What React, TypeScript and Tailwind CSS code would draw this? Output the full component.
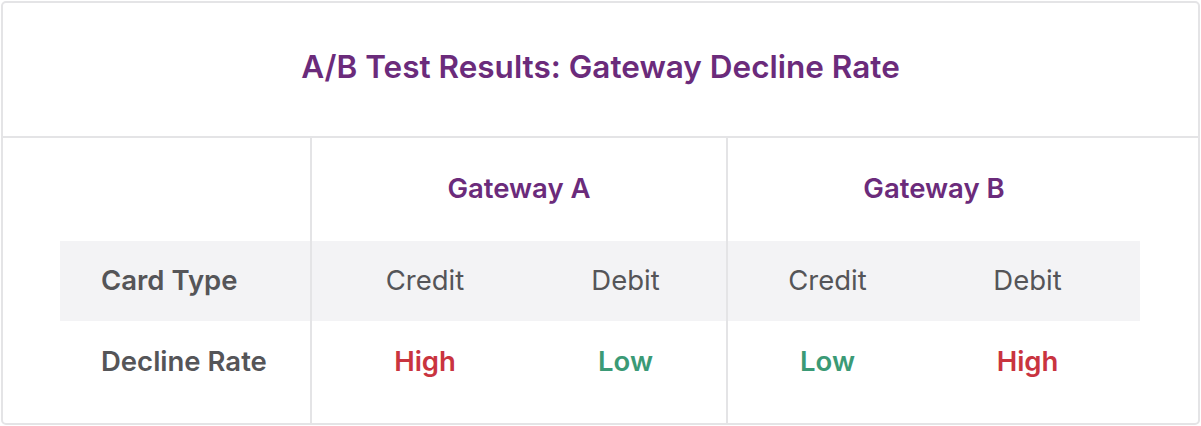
import React from "react";

const font = { fontFamily: '"Inter", "Open Sans", sans-serif' };

export default function App() {
  return (
    <div className="w-[1201px] h-[426px] bg-white p-px" style={font}>
      <div className="flex h-full flex-col overflow-hidden rounded-[5px] border-2 border-[#e4e4e6]">
        <div className="flex h-[135px] items-center justify-center border-b-2 border-[#e4e4e6] pb-[6px]">
          <h1 className="text-[31.5px] font-semibold tracking-[0px] text-[#6b2b7b]">
            A/B Test Results: Gateway Decline Rate
          </h1>
        </div>
        <div className="flex flex-1 flex-col">
          {/* gateway header row */}
          <div className="flex h-[103px]">
            <div className="w-[307px] shrink-0" />
            <div className="flex w-[416px] shrink-0 items-center justify-center border-l-2 border-[#e4e4e6] pb-[2px] text-[27.5px] font-semibold text-[#6b2b7b]">
              Gateway A
            </div>
            <div className="flex w-[414px] shrink-0 items-center justify-center border-l-2 border-[#e4e4e6] pb-[2px] text-[27.5px] font-semibold text-[#6b2b7b]">
              Gateway B
            </div>
            <div className="flex-1" />
          </div>
          {/* card type row */}
          <div className="flex h-[80px]">
            <div className="w-[57px] shrink-0" />
            <div className="flex w-[250px] shrink-0 items-center bg-[#f3f3f5] pl-[41px] text-[27.5px] font-semibold text-[#555558]">
              Card Type
            </div>
            <div className="flex w-[416px] shrink-0 border-l-2 border-[#e4e4e6] bg-[#f3f3f5] pl-[13px] text-[27.5px] text-[#555558]">
              <div className="flex w-[200px] items-center justify-center">Credit</div>
              <div className="flex w-[201px] items-center justify-center">Debit</div>
            </div>
            <div className="flex w-[414px] shrink-0 border-l-2 border-[#e4e4e6] bg-[#f3f3f5] text-[27.5px] text-[#555558]">
              <div className="flex w-[199px] items-center justify-center">Credit</div>
              <div className="flex w-[201px] items-center justify-center">Debit</div>
            </div>
            <div className="flex-1" />
          </div>
          {/* decline row */}
          <div className="flex flex-1">
            <div className="w-[57px] shrink-0" />
            <div className="flex h-[82px] w-[250px] shrink-0 items-center pl-[41px] text-[27.5px] font-semibold text-[#555558]">
              Decline Rate
            </div>
            <div className="flex w-[416px] shrink-0 border-l-2 border-[#e4e4e6] pl-[13px] text-[27.5px] font-semibold">
              <div className="flex h-[82px] w-[200px] items-center justify-center text-[#c9343f]">High</div>
              <div className="flex h-[82px] w-[201px] items-center justify-center text-[#3b9a76]">Low</div>
            </div>
            <div className="flex w-[414px] shrink-0 border-l-2 border-[#e4e4e6] text-[27.5px] font-semibold">
              <div className="flex h-[82px] w-[199px] items-center justify-center text-[#3b9a76]">Low</div>
              <div className="flex h-[82px] w-[201px] items-center justify-center text-[#c9343f]">High</div>
            </div>
            <div className="flex-1" />
          </div>
        </div>
      </div>
    </div>
  );
}
